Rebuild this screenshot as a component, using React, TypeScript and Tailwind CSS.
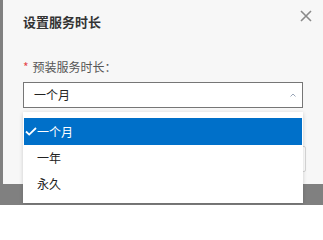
export default function App() {
  const options = ["一个月", "一年", "永久"];

  return (
    <div
      className="relative h-[205px] w-[323px] overflow-hidden bg-[#808080]"
      style={{ fontFamily: '"Noto Sans CJK SC", "Noto Sans", sans-serif' }}
    >
      <div className="relative ml-[3px] h-[184px] w-[320px] bg-[#f7f7f7] pl-[20px] pt-[13px]">
        <h2 className="h-[18px] text-[13px] leading-[18px] font-bold text-[#333]">
          设置服务时长
        </h2>
        <button
          type="button"
          className="absolute left-[297px] top-[10px] flex h-[12px] w-[12px] items-center justify-center"
        >
          <svg viewBox="0 0 12 12" className="h-[12px] w-[12px]">
            <path d="M1 1L11 11M11 1L1 11" stroke="#8a8a8a" strokeWidth="1.6" />
          </svg>
        </button>

        <p className="mt-[28px] h-[16px] text-[12px] leading-[16px] text-[#555]">
          <span className="mr-[4px] text-[#e5484d]">*</span>预装服务时长：
        </p>

        <div className="mt-[7px] flex h-[26px] w-[280px] items-center justify-between border border-[#767676] bg-white pl-[10px] pr-[6px]">
          <span className="text-[12px] text-[#222]">一个月</span>
          <svg viewBox="0 0 6 4" className="h-[4px] w-[6px]">
            <path d="M0.5 3.5L3 1L5.5 3.5" fill="none" stroke="#9aa6b8" strokeWidth="1" />
          </svg>
        </div>

        <div className="mt-[38px] h-[26px] w-[283px] rounded-[2px] border border-[#d6d6d6] bg-white" />
      </div>

      <ul className="absolute left-[23px] top-[112px] h-[91px] w-[280px] bg-white px-[1px] pt-[6px] shadow-[0_1px_4px_rgba(0,0,0,0.18)]">
        {options.map((option, i) => (
          <li
            key={option}
            className={
              i === 0
                ? "flex h-[27px] items-center bg-[#0070c9] pl-[1px] text-[12px] text-white"
                : "flex h-[26px] items-center pl-[13px] text-[12px] text-[#222]"
            }
          >
            {i === 0 && (
              <svg viewBox="0 0 12 9" className="h-[9px] w-[12px]">
                <path d="M1 4.5L4.2 7.6L11 1" fill="none" stroke="white" strokeWidth="1.8" />
              </svg>
            )}
            {option}
          </li>
        ))}
      </ul>
    </div>
  );
}
